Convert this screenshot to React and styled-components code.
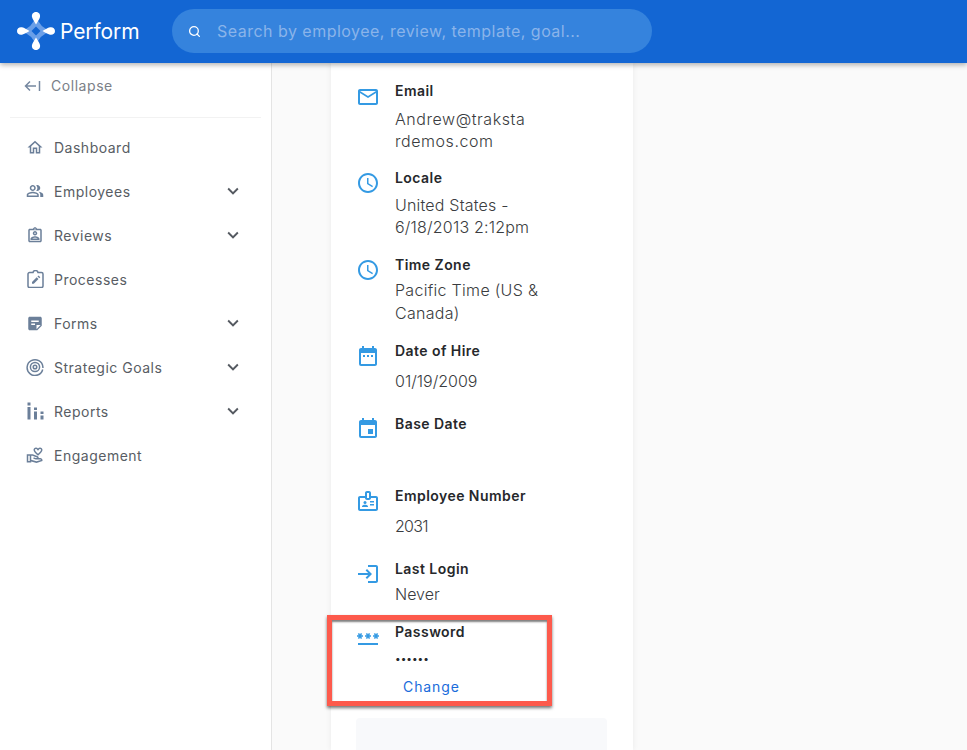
import React from 'react';
import styled, { createGlobalStyle } from 'styled-components';
import { Search } from 'lucide-react';
import {
  MdOutlineHome,
  MdOutlinePeopleAlt,
  MdOutlineAssignmentInd,
  MdStickyNote2,
  MdOutlineVolunteerActivism,
  MdKeyboardArrowDown,
  MdMailOutline,
  MdAccessTime,
  MdDateRange,
  MdEvent,
  MdOutlineBadge,
  MdLogin,
  MdPassword,
} from 'react-icons/md';

const GlobalStyle = createGlobalStyle`
  html, body {
    margin: 0;
    padding: 0;
    height: 100%;
    overflow: hidden;
    font-family: Inter, "Open Sans", "Liberation Sans", sans-serif;
    background: #fafafa;
  }
`;

const Page = styled.div`
  display: flex;
  flex-direction: column;
  height: 750px;
  overflow: hidden;
`;

const Header = styled.header`
  position: relative;
  z-index: 2;
  flex: 0 0 63px;
  box-sizing: border-box;
  display: flex;
  align-items: flex-start;
  padding: 9px 0 0 17px;
  background: #1366d3;
  box-shadow: 0 2px 5px rgba(0, 0, 0, 0.3);
`;

const Brand = styled.div`
  display: flex;
  align-items: center;
  gap: 5px;
  width: 155px;
  height: 44px;
  color: #fff;
  font-size: 21px;
  font-weight: 400;
  letter-spacing: -0.1px;
`;

const SearchBox = styled.div`
  display: flex;
  align-items: center;
  gap: 16px;
  width: 480px;
  height: 44px;
  box-sizing: border-box;
  padding-left: 16px;
  border-radius: 22px;
  background: #3583dd;
  color: #fff;
`;

const Placeholder = styled.span`
  color: #8ab4ea;
  font-size: 16px;
  letter-spacing: 0.48px;
  white-space: nowrap;
`;

const Body = styled.div`
  flex: 1;
  display: flex;
  min-height: 0;
`;

const Sidebar = styled.nav`
  flex: 0 0 271px;
  background: #fff;
  border-right: 1px solid #e4e4e4;
  box-sizing: content-box;
`;

const CollapseRow = styled.div`
  display: flex;
  align-items: center;
  gap: 10px;
  height: 55px;
  margin: 0 10px;
  padding: 0 14px 9px;
  border-bottom: 1px solid #f2f2f2;
  color: #7b8087;
  font-size: 14px;
  font-weight: 400;
  letter-spacing: 0.55px;
  box-sizing: border-box;
`;

const NavList = styled.div`
  display: flex;
  flex-direction: column;
  padding-top: 7px;
`;

const NavItem = styled.div`
  display: flex;
  align-items: center;
  height: 44px;
  padding: 0 27px 0 26px;
  color: #585d64;
  font-size: 14px;
  font-weight: 400;
`;

const NavIcon = styled.span`
  display: flex;
  align-items: center;
  justify-content: center;
  width: 18px;
  height: 18px;
  margin-right: 10px;
  color: #6b7f99;
`;

const NavLabel = styled.span`
  flex: 1;
  letter-spacing: 0.5px;
`;

const Chevron = styled(MdKeyboardArrowDown)`
  color: #555a61;
  font-size: 22px;
`;

const Main = styled.main`
  flex: 1;
  padding-left: 59px;
  background: #fafafa;
`;

const Card = styled.section`
  width: 302px;
  height: 100%;
  box-sizing: border-box;
  padding: 18px 26px 0 25px;
  background: #fff;
  box-shadow: 0 0 6px rgba(0, 0, 0, 0.07);
`;

const Row = styled.div`
  position: relative;
  display: grid;
  grid-template-columns: 24px 1fr;
  column-gap: 15px;
  margin-bottom: ${(p) => p.$after}px;
`;

const RowIcon = styled.div`
  margin-top: ${(p) => p.$top || 3}px;
  width: 24px;
  height: 24px;
  color: #349ae3;
  font-size: 24px;
  line-height: 0;
`;

const Label = styled.div`
  height: 20px;
  color: #26282b;
  font-size: 14px;
  line-height: 20px;
  font-weight: 600;
  letter-spacing: 0.45px;
  white-space: nowrap;
`;

const Value = styled.div`
  margin-top: ${(p) => p.$gap}px;
  color: #3a3c40;
  font-size: 16px;
  line-height: ${(p) => p.$line || 22}px;
  font-weight: 300;
  letter-spacing: ${(p) => p.$track || 0}px;
  white-space: nowrap;
`;

const Dots = styled.div`
  margin-top: 5px;
  height: 23px;
  color: #26282b;
  font-size: 10px;
  line-height: 22px;
  letter-spacing: 0;
`;

const ChangeLink = styled.a`
  display: block;
  margin: 7px 0 0 8px;
  color: #1a6cdb;
  font-size: 14px;
  line-height: 20px;
  font-weight: 400;
  letter-spacing: 0.9px;
`;

const Highlight = styled.div`
  position: absolute;
  left: -29px;
  top: -7px;
  width: 225px;
  height: 91px;
  box-sizing: border-box;
  border: 5px solid #fd5a4c;
  box-shadow: 0 2px 3px rgba(0, 0, 0, 0.55), inset 0 2px 2px rgba(0, 0, 0, 0.5);
  pointer-events: none;
`;

const GreyBlock = styled.div`
  height: 60px;
  border-radius: 4px;
  background: #f8f9fb;
`;

const Logo = () => (
  <svg width="38" height="38" viewBox="0 0 38 38">
    <path d="M19 4 Q22.5 15.500 34 19 Q22.500 22.500 19 34 Q15.500 22.500 4 19 Q15.500 15.500 19 4 Z" fill="#6a9fe8" />
    <path d="M19 14.500 L23.500 19 L19 23.500 L14.500 19 Z" fill="#1366d3" />
    <path d="M19 0 C22 0 23.500 2.500 23 5 C22.500 7.500 20.500 9.500 19 12.500 C17.500 9.500 15.500 7.500 15 5 C14.500 2.500 16 0 19 0 Z" fill="#fff" />
    <path d="M19 38 C22 38 23.500 35.500 23 33 C22.500 30.500 20.500 28.500 19 25.500 C17.500 28.500 15.500 30.500 15 33 C14.500 35.500 16 38 19 38 Z" fill="#fff" />
    <path d="M0 19 C0 16 2.500 14.800 5 15.300 C7.500 15.800 9.500 17.500 12.500 19 C9.500 20.500 7.500 22.200 5 22.700 C2.500 23.200 0 22 0 19 Z" fill="#fff" />
    <path d="M38 19 C38 16 35.500 14.800 33 15.300 C30.500 15.800 28.500 17.500 25.500 19 C28.500 20.500 30.500 22.200 33 22.700 C35.500 23.200 38 22 38 19 Z" fill="#fff" />
  </svg>
);

const CollapseIcon = () => (
  <svg width="17" height="12" viewBox="0 0 17 12" fill="none" stroke="#7688a0" strokeWidth="1.5">
    <path d="M12 6H1.500M6 1.500 1.500 6 6 10.500" />
    <path d="M15.500 1v10" />
  </svg>
);

const ProcessIcon = () => (
  <svg width="17" height="18" viewBox="0 0 17 18">
    <path
      d="M2.500 2.500H6C6.300 1.300 7.300.5 8.500.5s2.200.8 2.500 2h3.500c.8 0 1.500.7 1.500 1.500v12c0 .8-.7 1.500-1.500 1.500h-12C1.700 17.500 1 16.800 1 16V4c0-.8.7-1.500 1.500-1.500Z"
      fill="none"
      stroke="#6b7f99"
      strokeWidth="1.5"
    />
    <path d="M5 13.800V12l4.700-4.700 1.800 1.800L6.800 13.800H5Zm5.500-7.300 1-1 1.800 1.800-1 1-1.800-1.800Z" fill="#6b7f99" />
  </svg>
);

const GoalIcon = () => (
  <svg width="18" height="18" viewBox="0 0 18 18" fill="none" stroke="#6b7f99">
    <path d="M16.700 11.500A7.900 7.900 0 1 1 16.900 9v1" strokeWidth="1.5" />
    <circle cx="9" cy="9" r="4.600" strokeWidth="1.5" />
    <circle cx="9" cy="9" r="1.800" strokeWidth="1.5" />
  </svg>
);

const ReportIcon = () => (
  <svg width="17" height="18" viewBox="0 0 17 18" fill="#6b7f99">
    <rect x="0.5" y="0.5" width="3" height="3" />
    <rect x="0.5" y="5" width="3" height="12.5" />
    <rect x="7" y="5.5" width="3" height="2.5" />
    <rect x="7" y="9.5" width="3" height="8" />
    <rect x="13.5" y="9.5" width="3" height="2.5" />
    <rect x="13.5" y="13.5" width="3" height="4" />
  </svg>
);

const navItems = [
  { label: 'Dashboard', icon: <MdOutlineHome size={19} /> },
  { label: 'Employees', icon: <MdOutlinePeopleAlt size={18} />, more: true },
  { label: 'Reviews', icon: <MdOutlineAssignmentInd size={19} />, more: true },
  { label: 'Processes', icon: <ProcessIcon /> },
  { label: 'Forms', icon: <MdStickyNote2 size={19} />, more: true },
  { label: 'Strategic Goals', icon: <GoalIcon />, more: true },
  { label: 'Reports', icon: <ReportIcon />, more: true },
  { label: 'Engagement', icon: <MdOutlineVolunteerActivism size={18} /> },
];

function App() {
  return (
    <Page>
      <GlobalStyle />
      <Header>
        <Brand>
          <Logo />
          Perform
        </Brand>
        <SearchBox>
          <Search size={13} strokeWidth={2.4} />
          <Placeholder>Search by employee, review, template, goal...</Placeholder>
        </SearchBox>
      </Header>
      <Body>
        <Sidebar>
          <CollapseRow>
            <CollapseIcon />
            Collapse
          </CollapseRow>
          <NavList>
            {navItems.map((item) => (
              <NavItem key={item.label}>
                <NavIcon>{item.icon}</NavIcon>
                <NavLabel>{item.label}</NavLabel>
                {item.more && <Chevron />}
              </NavItem>
            ))}
          </NavList>
        </Sidebar>
        <Main>
          <Card>
            <Row $after={16}>
              <RowIcon $top={4}><MdMailOutline /></RowIcon>
              <div>
                <Label>Email</Label>
                <Value $gap={7} $track={0.55}>Andrew@traksta<br />rdemos.com</Value>
              </div>
            </Row>
            <Row $after={17}>
              <RowIcon><MdAccessTime /></RowIcon>
              <div>
                <Label>Locale</Label>
                <Value $gap={6} $track={0.2}>United States -<br />6/18/2013 2:12pm</Value>
              </div>
            </Row>
            <Row $after={16}>
              <RowIcon><MdAccessTime /></RowIcon>
              <div>
                <Label>Time Zone</Label>
                <Value $gap={4} $line={23} $track={0.3}>Pacific Time (US &amp;<br />Canada)</Value>
              </div>
            </Row>
            <Row $after={22}>
              <RowIcon><MdDateRange /></RowIcon>
              <div>
                <Label>Date of Hire</Label>
                <Value $gap={9}>01/19/2009</Value>
              </div>
            </Row>
            <Row $after={45}>
              <RowIcon><MdEvent /></RowIcon>
              <div>
                <Label>Base Date</Label>
              </div>
            </Row>
            <Row $after={22}>
              <RowIcon><MdOutlineBadge /></RowIcon>
              <div>
                <Label>Employee Number</Label>
                <Value $gap={9} $track={-0.7}>2031</Value>
              </div>
            </Row>
            <Row $after={17}>
              <RowIcon><MdLogin /></RowIcon>
              <div>
                <Label>Last Login</Label>
                <Value $gap={4}>Never</Value>
              </div>
            </Row>
            <Row $after={21}>
              <RowIcon $top={4}><MdPassword /></RowIcon>
              <div>
                <Label>Password</Label>
                <Dots>••••••</Dots>
                <ChangeLink>Change</ChangeLink>
              </div>
              <Highlight />
            </Row>
            <GreyBlock />
          </Card>
        </Main>
      </Body>
    </Page>
  );
}

export default App;
